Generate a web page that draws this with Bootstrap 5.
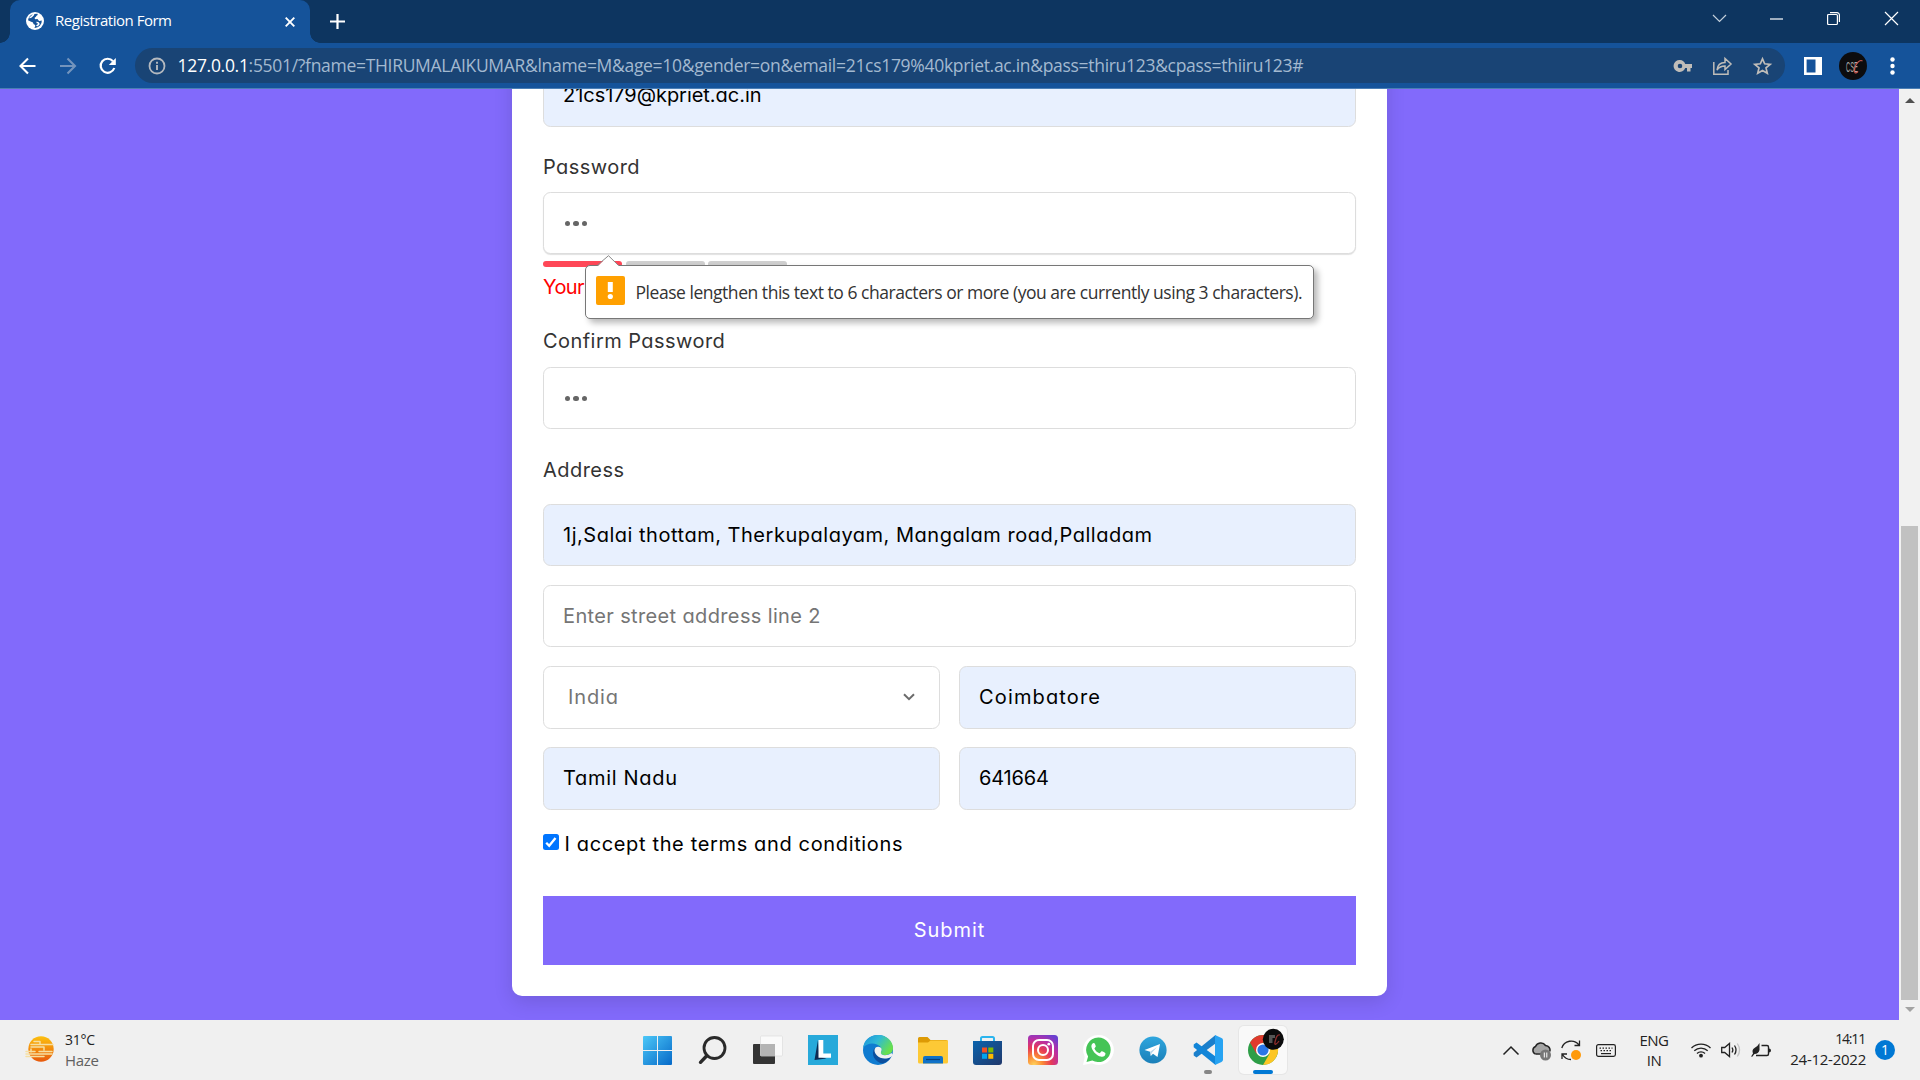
<!DOCTYPE html>
<html lang="en">
<head>
<meta charset="utf-8">
<title>Registration Form</title>
<link href="https://cdn.jsdelivr.net/npm/bootstrap@5.3.0/dist/css/bootstrap.min.css" rel="stylesheet">
<style>
body{width:1920px;height:1080px;overflow:hidden;font-family:"Open Sans","Noto Sans",sans-serif;background:#826afb}
svg{display:block;flex:none;overflow:visible}
.fit{white-space:nowrap;display:inline-block;vertical-align:top}
/* browser frame */
.tabstrip{height:43px;background:#0d3560}
.tab{margin-left:10px;width:300px;height:43px;background:#15539a;border-radius:10px 10px 0 0;color:#fff;font-size:15px;line-height:40px;position:relative}
.tab::before,.tab::after{content:"";position:absolute;bottom:0;width:10px;height:10px}
.tab::before{left:-10px;background:radial-gradient(circle at 0 0,transparent 9.5px,#15539a 10px)}
.tab::after{right:-10px;background:radial-gradient(circle at 100% 0,transparent 9.5px,#15539a 10px)}
.tabtitle{margin-left:11px;padding-bottom:4px;letter-spacing:-.476px}
.winctl{padding-bottom:6px}
.toolbar{height:46px;background:#15539a;border-bottom:1px solid #4b7fb5;padding-left:18px}
.omnibox{width:1650px;height:35px;margin-left:18px;border-radius:18px;background:#194475;color:#a3b9d0;font-size:17.5px;line-height:33px;padding-left:13px}
.omnibox b{font-weight:400;color:#fff}
.url{margin-left:11.5px;letter-spacing:-.303px}
/* page */
.viewport{height:931px;background:#826afb}
.page{width:1899px;padding-bottom:24px}
.regcard{width:875px;background:#fff;border-radius:10px;padding:31px;box-shadow:0 6px 19px rgba(0,0,0,.12);font-family:Inter,"Open Sans",sans-serif;font-size:20px;font-weight:400;color:#000;font-feature-settings:"cv11";line-height:24px}
.regcard label{color:#333;display:block;height:24px;line-height:25px;letter-spacing:.45px}
.lbl-pass{margin:28px 0 13px}
.lbl-confirm{margin:30.5px 0 13.5px}
.lbl-address{margin:28.5px 0 21.75px}
.field{height:62.5px;border:1px solid #ddd;border-radius:7.5px;padding:0 19px;line-height:61.5px;font-size:20px;font-weight:400;background:#fff;color:#757575;font-family:inherit}
.field.filled{background:#e8f0fe;color:#000}
.t-mail{letter-spacing:-.04px}
.t-street{letter-spacing:.517px}
.t-line2{letter-spacing:.361px}
.t-country{letter-spacing:.867px;margin-left:5px}
.t-city{letter-spacing:1.149px}
.t-state{letter-spacing:.688px}
.t-pin{letter-spacing:-.159px}
.t-terms{letter-spacing:.644px;margin-left:5.5px}
.stack{gap:18.75px}
.pair>*{width:397px}
.meter{height:6px;gap:3.5px;margin-top:6.5px}
.meter i{width:79px;height:6px;border-radius:3px;background:#cfcfcf}
.meter i:first-child{background:#ff4757}
.focused{box-shadow:0 1px 1px rgba(0,0,0,.12)}
.dots{gap:3px;height:62px;padding-left:2px}
.dots i{width:5.4px;height:5.4px;border-radius:50%;background:#666}
.err{color:#f00;height:24px;margin-top:8px;line-height:25px;letter-spacing:-.6px}
.terms{margin:22.25px 0 40px;height:24px}
.tick{width:16px;height:16px;margin-top:2px;background:#0075ff;border-radius:2.5px}
.submit{height:69px;border-radius:0;background:#826afb;color:#fff;font:inherit;letter-spacing:.95px;padding:0 0 2px}
.bubble{left:42px;top:73px;width:729px;height:54px;background:#fff;border:1px solid #777;border-radius:5px;box-shadow:4px 4px 6px rgba(0,0,0,.28);padding:0 10px;font:400 17.5px "Open Sans",sans-serif;color:#333}
.bubble .tip{left:11px;top:-11px}
.bubble .fit{margin-left:10.5px;letter-spacing:-.463px}
.scroll{width:21px;background:#f1f1f1}
.thumb{width:17px;height:474px;background:#c1c1c1}
/* taskbar */
.taskbar{height:60px;background:#f0f0f0;font-size:15px;line-height:20px;color:#222}
.weather{margin-left:11px;width:565px}
.weather .sky{color:#606060;letter-spacing:-.286px}
.t-temp{font-size:14px;letter-spacing:-.276px}
.t-lang{letter-spacing:-.5px}
.t-time{font-size:14px;letter-spacing:-1.176px;margin-right:1px}
.t-date{letter-spacing:-.253px}
.cell{width:55px;height:60px}
.chrometile{width:48px;height:48px;background:#f9f9f9;border-radius:5px;box-shadow:0 0 0 1px #e6e6e6}
.run{bottom:6px;width:8px;height:4px;border-radius:2px;background:#868686}
.run.active{width:20px;background:#0078d4}
.bell{width:20px;height:20px;margin-left:9px;border-radius:50%;background:#0078d4;color:#fff;font-size:14px;line-height:20px}
</style>
</head>
<body class="d-flex flex-column">
<header>
  <div class="tabstrip d-flex align-items-center">
    <div class="tab d-flex align-items-center">
      <svg class="ms-3" style="margin-top:-1px" width="18" height="18" viewBox="0 0 18 18"><circle cx="9" cy="9" r="9" fill="#fff"/><path d="M11.500 1.800c.6 1.300-.4 1.800-1.200 2.100-.3 1.300-1.500 1-1.700 2.100.1 1.300 1.300 1.400 2.600 1.100.9 0 .9 1.200 1.700 1.700 1 .5 1.900-.3 2.900-.3A7 7 0 0 1 8.600 16c-.2-1 .7-1.300.7-2.300 0-1.300-1.700-.8-2-2.100-.2-1.200-.9-1.700-2.200-1.900L2 8.200C2.500 5 4.500 2.600 8 2z" fill="#15539a"/><path d="M3.500 5.500c2 .4 2.300-1.500 4.500-3.300M10.500 10.500c1.500-.3 2.500.5 2.300 1.600-.6 1-1.500 1.200-2 2" fill="none" stroke="#fff" stroke-width="1.600"/></svg>
      <span class="fit tabtitle">Registration Form</span>
      <svg class="ms-auto" style="margin-right:15px" width="10" height="10" viewBox="0 0 10 10"><path d="M.7.7l8.600 8.600M9.300.7L.7 9.300" stroke="#fff" stroke-width="1.900"/></svg>
    </div>
    <svg style="margin-left:20px" width="15" height="15"><path d="M7.500 0v15M0 7.500h15" stroke="#fff" stroke-width="2.200"/></svg>
    <div class="winctl ms-auto d-flex align-items-center">
      <svg width="13" height="7"><path d="M0 0l6.500 6.500L13 0" fill="none" stroke="#c3cfdb" stroke-width="1.200"/></svg>
      <svg style="margin-left:44px" width="13" height="2"><path d="M0 1h13" stroke="#fff" stroke-width="1.200"/></svg>
      <svg style="margin-left:44px" width="13" height="13"><path d="M3 .6h7a2.400 2.400 0 0 1 2.400 2.400v7M.6 3.500q0-1 1-1h7.800q1 0 1 1v8q0 1-1 1H1.600q-1 0-1-1z" fill="none" stroke="#fff" stroke-width="1.200"/></svg>
      <svg style="margin-left:45px;margin-right:22px" width="13" height="13"><path d="M0 0l13 13M13 0L0 13" stroke="#fff" stroke-width="1.200"/></svg>
    </div>
  </div>
  <div class="toolbar d-flex align-items-center">
    <svg width="18" height="18" viewBox="0 0 18 18"><path d="M17.500 9H3M10 1.500L2.500 9l7.500 7.500" fill="none" stroke="#fff" stroke-width="2.100"/></svg>
    <svg style="margin-left:23px" width="18" height="18" viewBox="0 0 18 18"><path d="M1 9h14.500M8.500 1.500L16 9l-7.500 7.500" fill="none" stroke="#7394bd" stroke-width="2.100"/></svg>
    <svg style="margin-left:22px" width="18" height="18" viewBox="0 0 18 18"><path d="M14 4.200A7 7 0 1 0 15.300 11" fill="none" stroke="#fff" stroke-width="2.200"/><path d="M16.800 1v7h-7z" fill="#fff"/></svg>
    <div class="omnibox d-flex align-items-center">
      <svg width="18" height="18" viewBox="0 0 18 18"><circle cx="9" cy="9" r="7.500" fill="none" stroke="#b4b9bf" stroke-width="1.800"/><path d="M9 8v5M9 4.700v2" stroke="#b4b9bf" stroke-width="1.900"/></svg>
      <span class="fit url"><b>127.0.0.1</b>:5501/?fname=THIRUMALAIKUMAR&amp;lname=M&amp;age=10&amp;gender=on&amp;email=21cs179%40kpriet.ac.in&amp;pass=thiru123&amp;cpass=thiiru123#</span>
      <svg class="ms-auto" width="18" height="12" viewBox="0 0 18 12"><path fill-rule="evenodd" d="M6 0a6 6 0 1 0 5.200 8H13v3.500h3.500V8H18V4h-6.800A6 6 0 0 0 6 0zm0 3.700a2.300 2.300 0 1 1 0 4.600 2.300 2.300 0 0 1 0-4.600z" fill="#c0bdb9"/></svg>
      <svg style="margin-left:21px" width="19" height="18" viewBox="0 0 19 18"><path d="M.8 5v12.200H15V13M4 13c.5-5 3.500-7.500 8-7.500V1.500L18 7l-6 5.500V9c-3.500 0-6 1-8 4z" fill="none" stroke="#c0bdb9" stroke-width="1.500"/></svg>
      <svg style="margin-left:21px;margin-right:13px" width="19" height="18" viewBox="0 0 19 18"><path d="M9.500 1.800l2.200 5 5.500.5-4.200 3.600 1.300 5.400-4.800-2.900-4.800 2.900L6 10.900 1.800 7.300l5.500-.5z" fill="none" stroke="#c0bdb9" stroke-width="1.700"/></svg>
    </div>
    <svg style="margin-left:19px" width="18" height="18"><path d="M1.300 1.300h15.400v15.400H1.300z" fill="none" stroke="#fff" stroke-width="2.600"/><path d="M11.500 1H17v16h-5.500z" fill="#fff"/></svg>
    <svg style="margin-left:17px" width="28" height="28" viewBox="0 0 28 28"><circle cx="14" cy="14" r="14" fill="#0c0c0e"/><text x="7" y="19.500" font-family="Liberation Sans" font-size="15" textLength="12" lengthAdjust="spacingAndGlyphs" fill="#a9a9a9">CSE</text><path d="M23.500 9c-3-2-7 3-8 8-1 4 1 5 3.500 2.500" fill="none" stroke="#d05a50" stroke-width="1.100"/></svg>
    <svg style="margin-left:23px" width="5" height="18"><g fill="#fff"><circle cx="2.500" cy="2.500" r="2.200"/><circle cx="2.500" cy="9" r="2.200"/><circle cx="2.500" cy="15.500" r="2.200"/></g></svg>
  </div>
</header>

<div class="viewport d-flex overflow-hidden">
  <main class="page d-flex flex-column justify-content-end align-items-center">
    <form class="regcard">
      <div class="field form-control filled"><span class="fit t-mail">21cs179@kpriet.ac.in</span></div>
      <label class="lbl-pass">Password</label>
      <div class="position-relative">
        <div class="field form-control focused"><div class="dots d-flex align-items-center"><i></i><i></i><i></i></div></div>
        <div class="meter d-flex"><i></i><i></i><i></i></div>
        <div class="err">Your</div>
        <div class="bubble position-absolute d-flex align-items-center">
          <svg class="tip position-absolute" width="24" height="12" viewBox="0 0 24 12"><path d="M0 12L11.500.7 23 12z" fill="#fff"/><path d="M0 10.500L11.500.7 21.500 10.500" fill="none" stroke="#888" stroke-width="1"/></svg>
          <svg width="29" height="29" style="margin-top:-3px"><rect width="29" height="29" rx="2" fill="#ffa000"/><path d="M11.800 6h5v10h-5z" fill="#fff"/><circle cx="14.300" cy="20.500" r="2.600" fill="#fff"/></svg>
          <span class="fit">Please lengthen this text to 6 characters or more (you are currently using 3 characters).</span>
        </div>
      </div>
      <label class="lbl-confirm">Confirm Password</label>
      <div class="field form-control"><div class="dots d-flex align-items-center"><i></i><i></i><i></i></div></div>
      <label class="lbl-address">Address</label>
      <div class="stack d-flex flex-column">
        <div class="field form-control filled"><span class="fit t-street">1j,Salai thottam, Therkupalayam, Mangalam road,Palladam</span></div>
        <div class="field form-control"><span class="fit t-line2">Enter street address line 2</span></div>
        <div class="pair d-flex justify-content-between">
          <div class="field form-control d-flex align-items-center justify-content-between"><span class="fit t-country">India</span><svg style="margin-right:5px" width="12" height="8"><path d="M1 1.200l5 5 5-5" fill="none" stroke="#6b6b6b" stroke-width="2"/></svg></div>
          <div class="field form-control filled"><span class="fit t-city">Coimbatore</span></div>
        </div>
        <div class="pair d-flex justify-content-between">
          <div class="field form-control filled"><span class="fit t-state">Tamil Nadu</span></div>
          <div class="field form-control filled"><span class="fit t-pin">641664</span></div>
        </div>
      </div>
      <div class="terms d-flex">
        <svg class="tick" width="16" height="16"><path d="M3.200 8.700l3 3.100 6.300-7.800" fill="none" stroke="#fff" stroke-width="2.300"/></svg>
        <span class="fit t-terms">I accept the terms and conditions</span>
      </div>
      <button type="button" class="btn submit w-100">Submit</button>
    </form>
  </main>
  <aside class="scroll d-flex flex-column align-items-center">
    <svg style="margin-top:9px" width="10" height="5"><path d="M0 5l5-5 5 5z" fill="#505050"/></svg>
    <div class="thumb mt-auto"></div>
    <svg style="margin:7px 0 8px" width="10" height="5"><path d="M0 0h10L5 5z" fill="#a3a3a3"/></svg>
  </aside>
</div>

<footer class="taskbar d-flex align-items-center">
  <svg style="margin-left:26px;margin-top:-3px" width="28" height="26" viewBox="0 0 28 26"><defs><linearGradient id="haze" x2="0" y2="1"><stop stop-color="#fcc010"/><stop offset="1" stop-color="#e8590c"/></linearGradient></defs><circle cx="15" cy="13" r="12.700" fill="url(#haze)"/><path d="M8 5.500h6M14 5.500v2M5 8.500h22M5 11h13M18 11v3M5 13v3M13 15.500h13M0 15.500h9M0 18h26M0 20.500h18" stroke="#f6dfa2" stroke-width="1.500" stroke-linecap="round"/></svg>
  <div class="weather"><div><span class="fit t-temp">31°C</span></div><div class="sky">Haze</div></div>
  <nav class="d-flex">
    <div class="cell d-flex align-items-center justify-content-center"><svg width="29" height="29"><defs><linearGradient id="win" x2="1" y2="1"><stop stop-color="#4cc8f8"/><stop offset="1" stop-color="#0669c8"/></linearGradient></defs><path d="M1 0h13v14H0V1q0-1 1-1zM15 0h13q1 0 1 1v13H15zM0 15h14v14H1q-1 0-1-1zM15 15h14v13q0 1-1 1H15z" fill="url(#win)"/></svg></div>
    <div class="cell d-flex align-items-center justify-content-center"><svg width="28" height="28"><circle cx="15.500" cy="12" r="10.500" fill="none" stroke="#2a2a2a" stroke-width="2.800"/><path d="M8 19.500l-6.500 6.800" stroke="#2a2a2a" stroke-width="3.400" stroke-linecap="round"/></svg></div>
    <div class="cell d-flex align-items-center justify-content-center"><svg width="30" height="28"><rect y="8" width="22" height="20" rx="1" fill="#343434"/><rect x="7.500" width="22" height="20" rx="1" fill="#fafafa" stroke="#ddd" stroke-width=".7"/><path d="M7.500 8H22v12H7.500z" fill="#b4b4b4"/></svg></div>
    <div class="cell d-flex align-items-center justify-content-center"><svg width="30" height="30"><path d="M0 0h30v30H0z" fill="#27a9da"/><path d="M10 5L6.500 25l12-1.500-7-2z" fill="#0e2a52"/><path d="M10.500 5h4.800v13.500h7.700v4.200H10.500z" fill="#fff"/></svg></div>
    <div class="cell d-flex align-items-center justify-content-center"><svg width="30" height="30" viewBox="0 0 30 30"><defs><linearGradient id="ea" x2="1" y2=".5"><stop stop-color="#1b8fdc"/><stop offset=".5" stop-color="#2fb9d6"/><stop offset="1" stop-color="#68e04d"/></linearGradient></defs><circle cx="15" cy="15" r="15" fill="#0f7bd0"/><path d="M0 13C1 5 7 0 15 0c9 0 15 6.500 15 13 0 5-4 7-8 7-3.500 0-5-1.500-4-3 1.500-2.500 0-6-4-7.500C8.500 7.500 3 9 0 13z" fill="url(#ea)"/><path d="M11.500 13c-4 6 0 14 8 15.500 4-1 7-3.500 8.500-6.500-7 3.500-14 0-15-6z" fill="#0c4f9e"/><path d="M11.500 15c.3-3 3.500-4.200 6-2.500 2 1.500.8 3.500.5 4.500-.7 1.800.8 3.200 4 3.200 2 0 4.500-.6 6.500-2.200L30 20l-2 2c-5 2.500-11 2-14-1.500-1.500-1.500-2.600-3.500-2.500-5.500z" fill="#f0f0f0"/></svg></div>
    <div class="cell d-flex align-items-center justify-content-center"><svg width="30" height="27"><path d="M1.500 0h8l3 3H28q2 0 2 2v3H0V1.500Q0 0 1.500 0z" fill="#dd9a05"/><path d="M0 5.500h10l2.500-2H30V25q0 1.500-1.500 1.500H1.500Q0 26.500 0 25z" fill="#fdc936"/><path d="M5 26.500V21q0-2 2-2h16q2 0 2 2v5.500z" fill="#1072c8"/><path d="M8 22.500h14" stroke="#083f7c" stroke-width="1.200"/></svg></div>
    <div class="cell d-flex align-items-center justify-content-center"><svg width="29" height="29"><defs><linearGradient id="st" x2="1" y2="1"><stop stop-color="#0a63ad"/><stop offset="1" stop-color="#20386b"/></linearGradient></defs><path d="M8 6V2.500Q8 1 9.500 1h10Q21 1 21 2.500V6" fill="none" stroke="#2bb5ee" stroke-width="2"/><path d="M0 5h29v21q0 3-3 3H3q-3 0-3-3z" fill="url(#st)"/><path d="M9 11.500h5v5H9z" fill="#f25022"/><path d="M15.300 11.500h5v5h-5z" fill="#7fba00"/><path d="M9 17.800h5v5H9z" fill="#00a4ef"/><path d="M15.300 17.800h5v5h-5z" fill="#ffb900"/></svg></div>
    <div class="cell d-flex align-items-center justify-content-center"><svg width="30" height="30"><defs><radialGradient id="ig" cx=".2" cy="1" r="1.150"><stop stop-color="#ffd45c"/><stop offset=".25" stop-color="#fb8b36"/><stop offset=".5" stop-color="#e63a56"/><stop offset=".75" stop-color="#b92fa5"/><stop offset="1" stop-color="#6a3fd0"/></radialGradient></defs><rect width="30" height="30" rx="3.500" fill="url(#ig)"/><rect x="5" y="5" width="20" height="20" rx="6" fill="none" stroke="#fff" stroke-width="2"/><circle cx="15" cy="15" r="5" fill="none" stroke="#fff" stroke-width="2"/><circle cx="20.800" cy="9.200" r="1.400" fill="#fff"/></svg></div>
    <div class="cell d-flex align-items-center justify-content-center"><svg width="30" height="30"><path d="M15 0a15 15 0 1 1-6 28.300L0 30l1.800-8A15 15 0 0 1 15 0z" fill="#fff"/><path d="M15.300 2.500a12.300 12.300 0 1 1-6 23L3.500 27l1.600-5.600A12.300 12.300 0 0 1 15.300 2.500z" fill="#45c456"/><path d="M10.500 8c-2 .6-2.600 3-1.700 5.200 1.600 4 5 7.300 9 8.400 2.500.7 4.700-.7 4.700-3.100 0-.7-3.500-2.500-4-2.200l-1.800 2c-2.500-.8-4.500-2.800-5.300-4.900l1.400-1.900c.2-.6-1.200-3.600-1.600-3.600z" fill="#fff"/></svg></div>
    <div class="cell d-flex align-items-center justify-content-center"><svg width="28" height="28"><defs><linearGradient id="tg" x2="0" y2="1"><stop stop-color="#2fa6de"/><stop offset="1" stop-color="#1a7fb8"/></linearGradient></defs><circle cx="14" cy="14" r="13.600" fill="url(#tg)"/><path d="M5.500 14L21 8l-2.500 13-4.500-3.300-2.200 2.300-.6-4.200z" fill="#fff"/><path d="M11.200 15.800L18 11l-5.300 6-.9 3z" fill="#b8d6ea"/></svg></div>
    <div class="cell d-flex align-items-center justify-content-center position-relative"><svg width="30" height="30" viewBox="0 0 30 30"><path d="M.7 17.800L22.500 0v8.500L3.500 22.500.7 20.500z" fill="#1b7fcb"/><path d="M.7 9.500l2.800-2 19 14V30L.7 12.200z" fill="#1285d8"/><path d="M22 0l6.500 3q1.500.6 1.500 2.200v19.600q0 1.600-1.500 2.200L22 30z" fill="#27a3f2"/></svg><span class="run position-absolute"></span></div>
    <div class="cell d-flex align-items-center justify-content-center position-relative"><div class="chrometile d-flex align-items-center justify-content-center"><svg width="30" height="30" viewBox="0 0 30 30"><circle cx="15" cy="15" r="15" fill="#2e9e47"/><path d="M2 7.500A15 15 0 0 1 28 7.500H15L8.500 18.800z" fill="#e03a2e"/><path d="M28 7.500A15 15 0 0 1 15 30l6.500-11.300L15 7.500z" fill="#fcc624"/><circle cx="15" cy="15" r="7" fill="#fff"/><circle cx="15" cy="15" r="5.600" fill="#2a76e8"/><circle cx="25.300" cy="4.300" r="10.500" fill="#0b0b0c"/><path d="M21 0h6v3h-2.500v5H21z" fill="#555"/><path d="M32 0c-3-1-4 3-5 7s2 2 4-1" fill="none" stroke="#8e2c2a" stroke-width="1.300"/></svg></div><span class="run active position-absolute"></span></div>
  </nav>
  <div class="d-flex align-items-center" style="margin-left:213px">
    <svg width="16" height="9"><path d="M.5 8.500L8 1l7.500 7.500" fill="none" stroke="#222" stroke-width="1.500"/></svg>
    <svg style="margin-left:12px" width="20" height="19"><path d="M4.500 13a4 4 0 0 1 0-7.500C6 1.500 12 .5 14.500 4.500c3.500.3 5 3 4.500 6" fill="#a5a5a5" stroke="#222" stroke-width="1.500"/><path d="M4.500 13H10" stroke="#222" stroke-width="1.500"/><circle cx="14.500" cy="14" r="5.500" fill="#777"/><path d="M13.300 11.500v5M15.800 11.500v5" stroke="#fff"/></svg>
    <svg style="margin-left:10px" width="20" height="20"><path d="M.8 8C3 .5 13-1.500 18 5M18.500.5V5.500h-5M1 19v-5h5M1.500 14.500c2 3.500 5 5 8.500 5" fill="none" stroke="#222" stroke-width="1.300"/><circle cx="15" cy="15" r="5" fill="#ff9a0a"/></svg>
    <svg style="margin-left:15px" width="20" height="13"><rect x=".6" y=".6" width="18.800" height="11.800" rx="1.800" fill="none" stroke="#222" stroke-width="1.200"/><path d="M3.500 4.200h13M4.500 6.700h11" stroke="#222" stroke-width="1.300" stroke-dasharray="1.500 1.500"/><path d="M5 9.600h10" stroke="#222" stroke-width="1.200"/></svg>
    <div class="text-center t-lang" style="margin-left:20px;width:36px"><div>ENG</div><div>IN</div></div>
    <svg style="margin-left:19px" width="20" height="16"><g fill="none" stroke="#222" stroke-width="1.300"><path d="M.5 6a13.500 13.500 0 0 1 19 0M3.300 8.800a9.500 9.500 0 0 1 13.400 0M6 11.500a5.600 5.600 0 0 1 8 0"/></g><circle cx="10" cy="13.700" r="1.900" fill="#222"/></svg>
    <svg style="margin-left:10px" width="20" height="16"><path d="M.7 5.500h3l4.800-4v13l-4.800-4h-3z" fill="none" stroke="#222" stroke-width="1.300"/><path d="M11 5.500q1.700 2.500 0 5M13.500 3.500q3 4.500 0 9" fill="none" stroke="#222" stroke-width="1.300"/><path d="M16.300 1.500q4.500 6.500 0 13" fill="none" stroke="#c4c4c4" stroke-width="1.300"/></svg>
    <svg style="margin-left:10px" width="20" height="15"><path d="M10.500 2.500H16q1.500 0 1.500 1.500v7q0 1.500-1.500 1.500H5" fill="none" stroke="#222" stroke-width="1.400"/><path d="M18 5.500q2 0 2 2t-2 2zM8.500 0v7q-1 4-5 4L1 14l-.8-.8L2 10.500q-1.500-4 1.500-5.500Q7 3 8.500 0z" fill="#222"/></svg>
    <div class="text-end" style="margin-left:17px;width:78px;margin-top:-2px"><div><span class="fit t-time">14:11</span></div><div><span class="fit t-date">24-12-2022</span></div></div>
    <div class="bell text-center">1</div>
  </div>
</footer>
<script src="https://cdn.jsdelivr.net/npm/bootstrap@5.3.0/dist/js/bootstrap.bundle.min.js"></script>
</body>
</html>
